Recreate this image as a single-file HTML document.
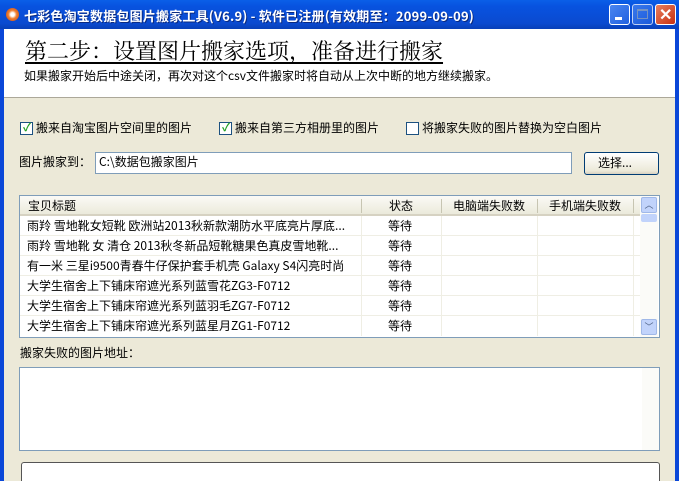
<!DOCTYPE html>
<html><head><meta charset="utf-8"><style>
*{margin:0;padding:0;box-sizing:border-box}
html{width:679px;height:481px;overflow:hidden}
body{width:679px;height:481px;overflow:hidden;background:#0a47d8;font-family:"Liberation Sans","Noto Sans CJK SC",sans-serif;font-size:12px;color:#000;position:relative}
.abs{position:absolute}
#tb{left:0;top:0;width:679px;height:29px;background:linear-gradient(#0a5fe8,#0853e0 20%,#0a4ad0 80%,#0840b8);}
#tt{left:24px;top:6px;color:#fff;font-weight:bold;font-size:13px;font-family:"Noto Sans CJK SC",sans-serif;letter-spacing:0.2px;white-space:nowrap;text-shadow:1px 1px #0a2a80}
.wb{top:4px;width:21px;height:21px;border:1px solid #fff;border-radius:3px;background:linear-gradient(135deg,#4a86f0,#2060e0)}
#main{left:4px;top:29px;width:671px;height:452px;background:#ece9d8}
#hdr{left:4px;top:29px;width:671px;height:69px;background:#fff;border-bottom:1px solid #aca899}
.cb{width:13px;height:13px;border:1px solid #1c5180;background:#fff;}
.t{white-space:nowrap;font-family:"Noto Sans CJK SC",sans-serif;font-size:12px;line-height:14px}
.row{position:absolute;left:20px;width:620px;height:20px;border-bottom:1px solid #efeee4;background:#fff}
.row span{position:absolute;top:3px}
</style></head><body>
<div id="tb" class="abs"></div>
<div class="abs" style="left:6px;top:8px;width:13px;height:13px;border-radius:50%;background:radial-gradient(#fff 20%,#f08030 45%,#c04010)"></div>
<div id="tt" class="abs">七彩色淘宝数据包图片搬家工具(V6.9) - 软件已注册(有效期至：2099-09-09)</div>
<div class="abs wb" style="left:609px"><div class="abs" style="left:5px;top:12px;width:7px;height:3px;background:#fff"></div></div>
<div class="abs wb" style="left:632px;opacity:.75"><div class="abs" style="left:4px;top:4px;width:11px;height:10px;border:1px solid #9ab;border-top-width:2px"></div></div>
<div class="abs wb" style="left:655px;background:linear-gradient(135deg,#e88060,#c83010)"><div class="abs t" style="left:3px;top:1px;color:#fff;font-size:16px;font-weight:bold">✕</div></div>
<div id="main" class="abs"></div>
<div id="hdr" class="abs"></div>
<div class="abs t" style="left:25px;top:37px;font-size:22px;line-height:28px;font-family:'Noto Serif CJK SC',serif;text-decoration:underline;text-underline-offset:3px">第二步：设置图片搬家选项，准备进行搬家</div>
<div class="abs t" style="left:24px;top:69px">如果搬家开始后中途关闭，再次对这个csv文件搬家时将自动从上次中断的地方继续搬家。</div>

<div class="abs cb" style="left:20px;top:122px"><div class="abs" style="left:2px;top:0px;color:#21a121;font-size:11px;font-weight:bold;line-height:11px">✓</div></div>
<div class="abs t" style="left:36px;top:121px">搬来自淘宝图片空间里的图片</div>
<div class="abs cb" style="left:219px;top:122px"><div class="abs" style="left:2px;top:0px;color:#21a121;font-size:11px;font-weight:bold;line-height:11px">✓</div></div>
<div class="abs t" style="left:235px;top:121px">搬来自第三方相册里的图片</div>
<div class="abs cb" style="left:406px;top:122px"></div>
<div class="abs t" style="left:422px;top:121px">将搬家失败的图片替换为空白图片</div>

<div class="abs t" style="left:19px;top:155px">图片搬家到：</div>
<div class="abs" style="left:95px;top:152px;width:477px;height:22px;background:#fff;border:1px solid #7f9db9"></div>
<div class="abs t" style="left:99px;top:155px">C:\数据包搬家图片</div>
<div class="abs" style="left:584px;top:152px;width:75px;height:23px;border:1px solid #003c74;border-radius:3px;background:linear-gradient(#fff,#ece9d8 85%,#d6d0c0)"></div>
<div class="abs t" style="left:598px;top:156px">选择...</div>

<div class="abs" style="left:19px;top:195px;width:641px;height:143px;background:#fff;border:1px solid #7f9db9"></div>
<div class="abs" style="left:20px;top:196px;width:620px;height:20px;background:linear-gradient(#fbfaf6,#ebeadb);border-bottom:2px solid #d6d2c2"></div>
<div class="abs t" style="left:28px;top:199px">宝贝标题</div>
<div class="abs t" style="left:389px;top:199px">状态</div>
<div class="abs t" style="left:453px;top:199px">电脑端失败数</div>
<div class="abs t" style="left:549px;top:199px">手机端失败数</div>
<div class="abs" style="left:361px;top:199px;width:1px;height:14px;background:#c7c5b2"></div>
<div class="abs" style="left:441px;top:199px;width:1px;height:14px;background:#c7c5b2"></div>
<div class="abs" style="left:537px;top:199px;width:1px;height:14px;background:#c7c5b2"></div>
<div class="abs" style="left:633px;top:199px;width:1px;height:14px;background:#c7c5b2"></div>

<div class="row" style="top:216px"><span class="t" style="left:7px">雨羚 雪地靴女短靴 欧洲站2013秋新款潮防水平底亮片厚底...</span><span class="t" style="left:368px">等待</span></div>
<div class="row" style="top:236px"><span class="t" style="left:7px">雨羚 雪地靴 女 清仓 2013秋冬新品短靴糖果色真皮雪地靴...</span><span class="t" style="left:368px">等待</span></div>
<div class="row" style="top:256px"><span class="t" style="left:7px">有一米 三星i9500青春牛仔保护套手机壳 Galaxy S4闪亮时尚</span><span class="t" style="left:368px">等待</span></div>
<div class="row" style="top:276px"><span class="t" style="left:7px">大学生宿舍上下铺床帘遮光系列蓝雪花ZG3-F0712</span><span class="t" style="left:368px">等待</span></div>
<div class="row" style="top:296px"><span class="t" style="left:7px">大学生宿舍上下铺床帘遮光系列蓝羽毛ZG7-F0712</span><span class="t" style="left:368px">等待</span></div>
<div class="row" style="top:316px;border:none"><span class="t" style="left:7px">大学生宿舍上下铺床帘遮光系列蓝星月ZG1-F0712</span><span class="t" style="left:368px">等待</span></div>
<div class="abs" style="left:361px;top:216px;width:1px;height:120px;background:#efeee4"></div>
<div class="abs" style="left:441px;top:216px;width:1px;height:120px;background:#efeee4"></div>
<div class="abs" style="left:537px;top:216px;width:1px;height:120px;background:#efeee4"></div>
<div class="abs" style="left:633px;top:216px;width:1px;height:120px;background:#efeee4"></div>
<div class="abs" style="left:640px;top:196px;width:18px;height:141px;background:#fbfbf8"></div>
<div class="abs" style="left:641px;top:197px;width:16px;height:16px;border-radius:2px;background:#c1d3fb;border:1px solid #a0b8e8;color:#4d6185;font-size:9px;text-align:center;line-height:14px">︿</div>
<div class="abs" style="left:641px;top:214px;width:16px;height:8px;border-radius:2px;background:#c1d3fb"></div>
<div class="abs" style="left:641px;top:319px;width:16px;height:16px;border-radius:2px;background:#c1d3fb;border:1px solid #a0b8e8;color:#4d6185;font-size:9px;text-align:center;line-height:14px">﹀</div>

<div class="abs t" style="left:20px;top:346px">搬家失败的图片地址：</div>
<div class="abs" style="left:19px;top:367px;width:641px;height:84px;background:#fff;border:1px solid #7f9db9"></div>
<div class="abs" style="left:642px;top:368px;width:17px;height:82px;background:#fbfbf8"></div>
<div class="abs" style="left:21px;top:462px;width:639px;height:19px;background:#fff;border:1px solid #555;border-bottom:none;border-radius:3px 3px 0 0"></div>
<div class="abs" style="left:675px;top:29px;width:4px;height:452px;background:#0a47d8"></div>
</body></html>
